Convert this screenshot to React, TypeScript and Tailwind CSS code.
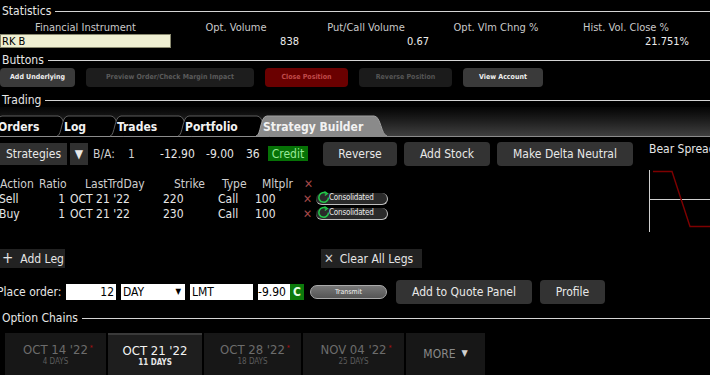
import React from "react";

const font = { fontFamily: '"DejaVu Sans Condensed", "DejaVu Sans", Verdana, sans-serif' };

const SectionHead = ({ label, className }: { label: string; className?: string }) => (
  <div className={"flex items-center gap-[4px] pl-[2px] " + (className ?? "")}>
    <span className="text-[12px] leading-none text-[#e6e6e6]">{label}</span>
    <div className="flex-1 h-px bg-[#d4d4d4]" />
  </div>
);

const stats = [
  { label: "Opt. Volume", value: "838" },
  { label: "Put/Call Volume", value: "0.67" },
  { label: "Opt. Vlm Chng %", value: "" },
  { label: "Hist. Vol. Close %", value: "21.751%" },
];

const topButtons = [
  { label: "Add Underlying", w: "w-[75px]", cls: "bg-[#3a3a3a] text-[#f0f0f0]" },
  { label: "Preview Order/Check Margin Impact", w: "w-[168px]", cls: "bg-[#1d1d1d] text-[#5a5a5a]" },
  { label: "Close Position", w: "w-[83px]", cls: "bg-[#6a0000] text-[#c04a4a]" },
  { label: "Reverse Position", w: "w-[93px]", cls: "bg-[#1b1b1b] text-[#555]" },
  { label: "View Account", w: "w-[80px]", cls: "bg-[#3a3a3a] text-[#f0f0f0]" },
];

// step = distance to the next tab's left edge
const tabs = [
  { label: "Orders", step: 66, active: false },
  { label: "Log", step: 53, active: false },
  { label: "Trades", step: 68, active: false },
  { label: "Portfolio", step: 78, active: false },
  { label: "Strategy Builder", step: 131, active: true },
];

const Tab = ({ label, step, active }: { label: string; step: number; active: boolean }) => {
  const w = active ? step : step + 14;
  return (
    <div className="relative h-[21px] shrink-0" style={{ width: step }}>
      <svg className="absolute left-0 top-0 overflow-visible" width={w} height={21} viewBox={`0 0 ${w} 21`}>
        <path
          d={`M0 21 C5 21 4 1 11 1 L${w - 13} 1 C${w - 6} 1 ${w - 6} 20 ${w} 21`}
          fill={active ? "#8a8a8a" : "#000"}
          stroke={active ? "#a0a0a0" : "#5c5c5c"}
          strokeWidth="1"
        />
      </svg>
      <span className="relative flex h-full items-center whitespace-nowrap pt-[2px] pl-[7px] text-[12px] font-bold text-[#f2f2f2]">
        {label}
      </span>
    </div>
  );
};

const GreyBtn = ({ children, className }: { children: React.ReactNode; className?: string }) => (
  <div
    className={
      "flex items-center justify-center whitespace-nowrap rounded-[4px] bg-[#333] text-[12px] text-[#e8e8e8] " +
      (className ?? "")
    }
  >
    {children}
  </div>
);

const RedX = () => <span className="text-[12px] font-bold leading-none text-[#a44848]">✕</span>;

const Consolidated = () => (
  <div className="relative flex h-[12px] w-[72px] items-center rounded-full border-b border-r border-[#c0c0c0] bg-[#2a2a2a] pl-[13px]">
    <svg className="absolute left-[2px] top-[-2px]" width="12" height="13" viewBox="0 0 12 13">
      <path d="M8.5 2.5 A4.8 4.8 0 1 0 10.5 6.5" fill="none" stroke="#22c84a" strokeWidth="1.5" />
      <path d="M6.5 0.5 L9.5 2.6 L6.8 4.6" fill="none" stroke="#22c84a" strokeWidth="1.2" />
    </svg>
    <span className="text-[8px] leading-none tracking-[-0.2px] text-[#ececec]">Consolidated</span>
  </div>
);

const legs = [
  { action: "Sell", strike: "220" },
  { action: "Buy", strike: "230" },
];

const expiries = [
  { d: "OCT 14 '22", days: "4 DAYS", w: "w-[101px]", star: true, active: false },
  { d: "OCT 21 '22", days: "11 DAYS", w: "w-[94px]", star: false, active: true },
  { d: "OCT 28 '22", days: "18 DAYS", w: "w-[97px]", star: true, active: false },
  { d: "NOV 04 '22", days: "25 DAYS", w: "w-[101px]", star: true, active: false },
];

export default function App() {
  return (
    <div className="w-[710px] h-[375px] overflow-hidden bg-black text-[#e6e6e6]" style={font}>
      {/* Statistics */}
      <SectionHead label="Statistics" className="h-[21px] pt-[1px]" />
      <div className="flex h-[12px] items-center whitespace-nowrap text-[11px] leading-none text-[#cacaca]">
        <div className="w-[171px] text-center">Financial Instrument</div>
        {stats.map((s) => (
          <div key={s.label} className="w-[130px] text-center">
            {s.label}
          </div>
        ))}
      </div>
      <div className="mt-[1px] flex h-[14px] items-center text-[11px] leading-none text-[#ececec]">
        <div className="flex h-[14px] w-[171px] items-center border border-[#8a8a70] bg-[#efefd2] pl-[1px] text-black">
          RK B
        </div>
        {stats.map((s) => (
          <div key={s.label} className="w-[130px] pr-[2px] text-right">
            {s.value}
          </div>
        ))}
      </div>

      {/* Buttons */}
      <SectionHead label="Buttons" className="mt-[5px] h-[14px]" />
      <div className="mt-[1px] flex h-[19px] gap-[11px]">
        {topButtons.map((b) => (
          <div
            key={b.label}
            className={`${b.w} ${b.cls} flex items-center justify-center whitespace-nowrap rounded-[4px] text-[7px] font-bold`}
          >
            {b.label}
          </div>
        ))}
      </div>

      {/* Trading */}
      <SectionHead label="Trading" className="mt-[6px] h-[14px]" />
      <div className="h-[29px] flex items-end bg-gradient-to-b from-[#050505] to-[#404040]">
        <div className="-ml-[9px] flex">
          {tabs.map((t) => (
            <Tab key={t.label} {...t} />
          ))}
        </div>
      </div>
      <div className="h-[1px] bg-[#8c8c8c]" />

      <div className="flex">
        {/* left area */}
        <div className="flex-1">
          <div className="mt-[5px] flex h-[23px] items-center whitespace-nowrap text-[12px]">
            <GreyBtn className="h-[22px] w-[67px] rounded-none bg-[#303030]">Strategies</GreyBtn>
            <GreyBtn className="ml-[3px] h-[22px] w-[18px] rounded-none bg-[#303030] text-[11px]">▼</GreyBtn>
            <span className="ml-[5px] w-[35px] text-[#cfcfcf]">B/A:</span>
            <span className="w-[32px] text-[#cfcfcf]">1</span>
            <span className="w-[46px]">-12.90</span>
            <span className="w-[40px]">-9.00</span>
            <span className="w-[22px]">36</span>
            <span className="flex h-[15px] w-[40px] items-center justify-center bg-[#067206] text-[#98e898]">Credit</span>
            <GreyBtn className="ml-[15px] h-[24px] w-[74px]">Reverse</GreyBtn>
            <GreyBtn className="ml-[7px] h-[24px] w-[86px]">Add Stock</GreyBtn>
            <GreyBtn className="ml-[7px] h-[24px] w-[136px]">Make Delta Neutral</GreyBtn>
          </div>

          {/* legs table */}
          <div className="mt-[11px] whitespace-nowrap text-[12px] leading-none">
            <div className="flex h-[15px] items-center text-[#cfcfcf]">
              <span className="w-[39px]">Action</span>
              <span className="w-[46px]">Ratio</span>
              <span className="w-[89px]">LastTrdDay</span>
              <span className="w-[48px]">Strike</span>
              <span className="w-[40px]">Type</span>
              <span className="w-[42px]">Mltplr</span>
              <RedX />
            </div>
            {legs.map((l) => (
              <div key={l.action} className="flex h-[15px] items-center text-[#e6e6e6]">
                <span className="-ml-[1px] w-[40px]">{l.action}</span>
                <span className="w-[26px] text-right">1</span>
                <span className="ml-[5px] w-[93px]">OCT 21 '22</span>
                <span className="w-[55px]">{l.strike}</span>
                <span className="w-[37px]">Call</span>
                <span className="w-[48px]">100</span>
                <RedX />
                <div className="ml-[4px]">
                  <Consolidated />
                </div>
              </div>
            ))}
          </div>

          {/* add / clear legs */}
          <div className="mt-[28px] flex h-[19px] whitespace-nowrap text-[12px]">
            <div className="flex w-[65px] items-center gap-[7px] bg-[#222] pl-[2px]">
              <span className="text-[15px] leading-none">+</span>
              <span>Add Leg</span>
            </div>
            <div className="ml-[256px] flex w-[101px] items-center gap-[6px] bg-[#222] pl-[3px]">
              <span className="text-[13px] leading-none text-[#cfcfcf]">✕</span>
              <span>Clear All Legs</span>
            </div>
          </div>

          {/* place order */}
          <div className="mt-[12px] flex h-[24px] items-center whitespace-nowrap text-[12px]">
            <span className="-ml-[3px] w-[69px] text-[#e6e6e6]">Place order:</span>
            <div className="h-[16px] w-[50px] bg-white pr-[2px] text-right leading-[16px] text-black">12</div>
            <div className="ml-[5px] flex h-[16px] w-[64px] items-center justify-between bg-white pl-[2px] pr-[4px] text-black">
              <span>DAY</span>
              <span className="text-[8px]">▼</span>
            </div>
            <div className="ml-[5px] h-[16px] w-[63px] bg-white pl-[2px] leading-[16px] text-black">LMT</div>
            <div className="ml-[5px] h-[16px] w-[32px] bg-white leading-[16px] text-black">-9.90</div>
            <div className="flex h-[16px] w-[14px] items-center justify-center bg-[#0c7a0c] font-bold text-[#e8ffe8]">C</div>
            <div className="ml-[6px] flex h-[14px] w-[77px] items-center justify-center rounded-full border border-[#aaa] bg-gradient-to-b from-[#777] to-[#555] text-[7px] text-[#f0f0f0]">
              Transmit
            </div>
            <GreyBtn className="ml-[9px] h-[24px] w-[136px]">Add to Quote Panel</GreyBtn>
            <GreyBtn className="ml-[8px] h-[24px] w-[65px]">Profile</GreyBtn>
          </div>
        </div>

        {/* right: strategy graph */}
        <div className="w-[61px] shrink-0 pt-[3px]">
          <div className="whitespace-nowrap text-[12px] text-[#e6e6e6]">Bear Spread</div>
          <svg className="mt-[12px]" width="61" height="62" viewBox="0 0 61 62">
            <line x1="0.5" y1="0" x2="0.5" y2="62" stroke="#d0d0d0" strokeWidth="1" />
            <line x1="0" y1="29.5" x2="61" y2="29.5" stroke="#d0d0d0" strokeWidth="1" />
            <polyline points="4,1.5 23,1.5 41,56.5 61,56.5" fill="none" stroke="#7e0000" strokeWidth="1.4" />
          </svg>
        </div>
      </div>

      {/* Option Chains */}
      <SectionHead label="Option Chains" className="mt-[7px] h-[14px]" />
      <div className="mt-[8px] flex h-[42px] pl-[5px] whitespace-nowrap">
        {expiries.map((e) => (
          <div
            key={e.d}
            className={
              `${e.w} mr-[2px] flex flex-col items-center justify-center ` +
              (e.active ? "border-t-2 border-[#3a3a3a] bg-[#1e1e1e]" : "bg-[#171717]")
            }
          >
            <div className={"relative text-[13px] leading-[15px] " + (e.active ? "text-[#f4f4f4]" : "text-[#6c6c6c]")}>
              {e.d}
              {e.star && <span className="absolute -right-[5px] top-[-1px] text-[7px] text-[#b01010]">*</span>}
            </div>
            <div className={"text-[8px] leading-[10px] " + (e.active ? "font-bold text-[#e6e6e6]" : "text-[#5c5c5c]")}>
              {e.days}
            </div>
          </div>
        ))}
        <div className="flex w-[79px] items-center justify-center gap-[6px] bg-[#171717] text-[12px] text-[#8a8a8a]">
          <span>MORE</span>
          <span className="text-[9px] text-[#d0d0d0]">▼</span>
        </div>
      </div>
    </div>
  );
}
